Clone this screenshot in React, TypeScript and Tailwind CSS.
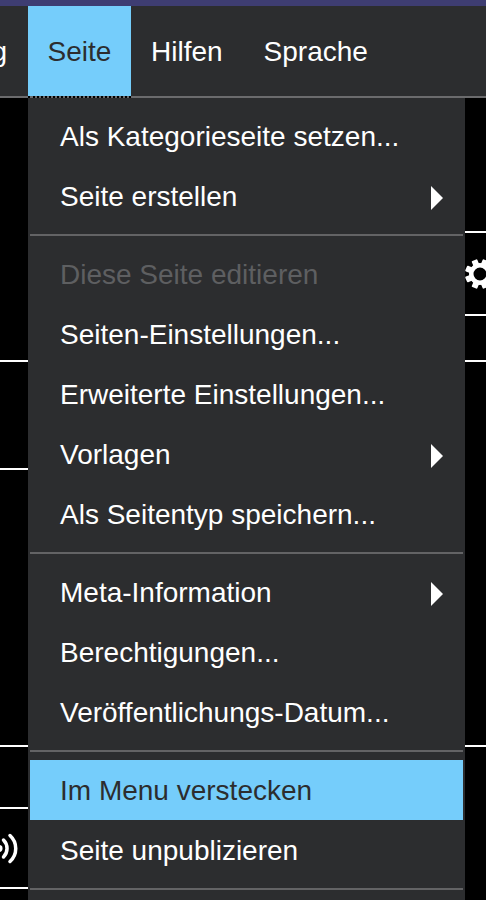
import React from "react";

function Arrow() {
  return (
    <svg width="12" height="24" viewBox="0 0 12 24" className="absolute left-[401px] top-[20px]">
      <polygon points="0,0 12,12 0,24" fill="#ffffff" />
    </svg>
  );
}

function Item({ label, arrow, disabled, active }: { label: string; arrow?: boolean; disabled?: boolean; active?: boolean }) {
  return (
    <div
      className={
        "relative h-[60px] flex items-center pl-[30px] pt-[2px] whitespace-nowrap " +
        (active ? "bg-[#75cdfb] text-[#2c2d2f]" : disabled ? "text-[#5e5f61]" : "text-white")
      }
    >
      {label}
      {arrow && <Arrow />}
    </div>
  );
}

function Sep() {
  return <div className="h-[2px] my-[8px] bg-[#636365]" />;
}

function Gear() {
  return (
    <svg width="30" height="30" viewBox="0 0 30 30" className="absolute left-[465px] top-[259px]">
      <g fill="#ffffff">
        {[22.5, 67.5, 112.5, 157.5, 202.5, 247.5, 292.5, 337.5].map((a) => (
          <rect key={a} x="12" y="0" width="6" height="7" rx="1" transform={`rotate(${a} 15 15)`} />
        ))}
      </g>
      <circle cx="15" cy="15" r="8.75" fill="none" stroke="#ffffff" strokeWidth="4.5" />
    </svg>
  );
}

function Wifi() {
  return (
    <svg width="20" height="35" viewBox="0 0 20 35" className="absolute left-0 top-[733px]">
      <circle cx="-1" cy="17.5" r="3.5" fill="#ffffff" />
      <g fill="none" stroke="#ffffff" strokeWidth="3.5" strokeLinecap="round">
        <path d="M3.5 9 A 12 12 0 0 1 3.5 26" />
        <path d="M10 4.5 A 17.6 17.6 0 0 1 10 30.5" />
      </g>
    </svg>
  );
}

export default function App() {
  return (
    <div className="relative h-[900px] w-[486px] overflow-hidden bg-black font-['Liberation_Sans',Arial,sans-serif] text-[28px]">
      <div className="h-[6px] bg-[#3e3d72]" />
      <div className="h-[90px] flex items-center bg-[#2c2d2f] text-white pt-[2px]">
        <div className="w-[28px] pr-[21px] flex justify-end">g</div>
        <div className="h-[90px] -mt-[2px] pt-[2px] w-[103px] flex items-center justify-center bg-[#75cdfb] text-[#2c2d2f]">Seite</div>
        <div className="pl-[20px] pr-[21px]">Hilfen</div>
        <div className="pl-[20px] pr-[21px]">Sprache</div>
      </div>
      <div className="flex h-[2px] bg-[#6b6b6d]">
        <div className="w-[28px]" />
        <div className="w-[103px] border-b-2 border-dotted border-black" />
      </div>
      <div className="flex h-[802px]">
        <div className="relative w-[28px]">
          <div className="h-[264px] border-b-2 border-white" />
          <div className="h-[108px] border-b-2 border-white" />
          <div className="h-[277px] border-b-2 border-white" />
          <div className="h-[62px] border-b-2 border-white" />
          <div className="h-[80px] border-b-2 border-white" />
          <Wifi />
        </div>
        <div className="w-[437px] bg-[#2c2d2f] px-[2px] pt-[8px]">
          <Item label="Als Kategorieseite setzen..." />
          <Item label="Seite erstellen" arrow />
          <Sep />
          <Item label="Diese Seite editieren" disabled />
          <Item label="Seiten-Einstellungen..." />
          <Item label="Erweiterte Einstellungen..." />
          <Item label="Vorlagen" arrow />
          <Item label="Als Seitentyp speichern..." />
          <Sep />
          <Item label="Meta-Information" arrow />
          <Item label="Berechtigungen..." />
          <Item label="Veröffentlichungs-Datum..." />
          <Sep />
          <Item label="Im Menu verstecken" active />
          <Item label="Seite unpublizieren" />
          <Sep />
        </div>
        <div className="flex-1">
          <div className="h-[135px] border-b-2 border-white" />
          <div className="h-[83px] border-b-2 border-white" />
          <div className="h-[46px] border-b-2 border-white" />
          <div className="h-[385px] border-b-2 border-white" />
        </div>
      </div>
      <Gear />
    </div>
  );
}
